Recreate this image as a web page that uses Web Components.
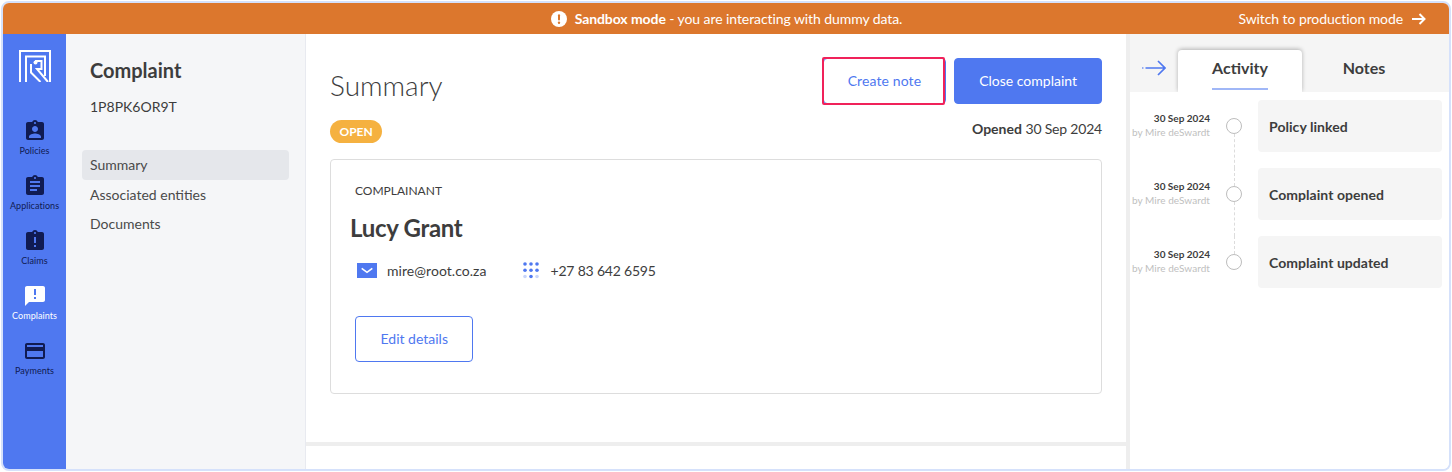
<!DOCTYPE html>
<html>
<head>
<meta charset="utf-8">
<title>Complaint</title>
<style>
	html, body { margin: 0; height: 100%; background: #fff; }
	body { padding: 1px; box-sizing: border-box; font-family: Lato, sans-serif; color: #3d3d3d; }
</style>
</head>
<body>
<app-frame>
	<sandbox-banner slot="banner"></sandbox-banner>
	<side-rail slot="rail">
		<rail-item label="Policies" icon="ind"></rail-item>
		<rail-item label="Applications" icon="assign"></rail-item>
		<rail-item label="Claims" icon="late"></rail-item>
		<rail-item label="Complaints" icon="announce" active></rail-item>
		<rail-item label="Payments" icon="card"></rail-item>
	</side-rail>
	<sub-nav slot="nav" title="Complaint" ref="1P8PK6OR9T">
		<nav-link active>Summary</nav-link>
		<nav-link>Associated entities</nav-link>
		<nav-link>Documents</nav-link>
	</sub-nav>
	<summary-view slot="main"></summary-view>
	<activity-panel slot="aside">
		<activity-row first title="Policy linked"></activity-row>
		<activity-row title="Complaint opened"></activity-row>
		<activity-row last title="Complaint updated"></activity-row>
	</activity-panel>
</app-frame>

<script>
const html = String.raw;
const css = String.raw;

const ICONS = {
	ind: "M19 3h-4.18C14.4 1.84 13.3 1 12 1c-1.3 0-2.4.84-2.82 2H5c-1.1 0-2 .9-2 2v14c0 1.1.9 2 2 2h14c1.1 0 2-.9 2-2V5c0-1.1-.9-2-2-2zm-7 0c.55 0 1 .45 1 1s-.45 1-1 1-1-.45-1-1 .45-1 1-1zm0 4c1.66 0 3 1.34 3 3s-1.34 3-3 3-3-1.34-3-3 1.34-3 3-3zm6 12H6v-1.4c0-2 4-3.1 6-3.1s6 1.1 6 3.1V19z",
	assign: "M19 3h-4.18C14.4 1.84 13.3 1 12 1c-1.3 0-2.4.84-2.82 2H5c-1.1 0-2 .9-2 2v14c0 1.1.9 2 2 2h14c1.1 0 2-.9 2-2V5c0-1.1-.9-2-2-2zm-7 0c.55 0 1 .45 1 1s-.45 1-1 1-1-.45-1-1 .45-1 1-1zm2 14H7v-2h7v2zm3-4H7v-2h10v2zm0-4H7V7h10v2z",
	late: "M19 3h-4.18C14.4 1.84 13.3 1 12 1c-1.3 0-2.4.84-2.82 2H5c-1.1 0-2 .9-2 2v14c0 1.1.9 2 2 2h14c1.1 0 2-.9 2-2V5c0-1.1-.9-2-2-2zm-6 15h-2v-2h2v2zm0-4h-2V8h2v6zm-1-9c-.55 0-1-.45-1-1s.45-1 1-1 1 .45 1 1-.45 1-1 1z",
	announce: "M20 2H4c-1.1 0-1.99.9-1.99 2L2 22l4-4h14c1.1 0 2-.9 2-2V4c0-1.1-.9-2-2-2zm-7 9h-2V5h2v6zm0 4h-2v-2h2v2z",
	card: "M20 4H4c-1.11 0-1.99.89-1.99 2L2 18c0 1.11.89 2 2 2h16c1.11 0 2-.89 2-2V6c0-1.11-.89-2-2-2zm0 14H4v-6h16v6zm0-10H4V6h16v2z",
};

// small helper, every element here is just a template in a shadow root
function define(name, markup) {
	const template = document.createElement("template");
	template.innerHTML = markup;
	customElements.define(name, class extends HTMLElement {
		constructor() {
			super();
			this.attachShadow({ mode: "open" });
			this.shadowRoot.appendChild(template.content.cloneNode(true));
		}
	});
}

define("app-frame", html`
	<style>${css`
		:host {
			display: grid;
			grid-template-columns: 63px 240px 820px 4px 1fr;
			grid-template-rows: 31px 1fr;
			height: 100%;
			box-sizing: border-box;
			border: 2px solid #d5e1fb;
			border-radius: 8px;
			overflow: hidden;
			background: #fff;
		}
		slot[name="banner"] { display: block; grid-column: 1 / -1; }
		.split { background: #eeeeee; }
	`}</style>
	<slot name="banner"></slot>
	<slot name="rail"></slot>
	<slot name="nav"></slot>
	<slot name="main"></slot>
	<div class="split"></div>
	<slot name="aside"></slot>
`);

define("sandbox-banner", html`
	<style>${css`
		:host {
			display: grid;
			grid-template-columns: 1fr auto 1fr;
			align-items: center;
			height: 31px;
			background: #dc772d;
			color: #fff;
			font-size: 14px;
			letter-spacing: -0.08px;
		}
		.msg { grid-column: 2; display: flex; align-items: center; gap: 7px; }
		.switch {
			justify-self: end;
			display: flex;
			align-items: center;
			gap: 9px;
			padding-right: 23px;
		}
		b { font-weight: 700; }
		svg { display: block; }
	`}</style>
	<div class="msg">
		<svg width="18" height="18" viewBox="0 0 18 18"><circle cx="9" cy="9" r="8" fill="#fff"/><rect x="8" y="4.2" width="2" height="6.2" rx="1" fill="#dc772d"/><circle cx="9" cy="12.7" r="1.2" fill="#dc772d"/></svg>
		<span><b>Sandbox mode</b> - you are interacting with dummy data.</span>
	</div>
	<div class="switch">
		<span>Switch to production mode</span>
		<svg width="14" height="12" viewBox="0 0 14 12" fill="none" stroke="#fff" stroke-width="2"><path d="M0 6h12.5M7.5 1l5 5-5 5"/></svg>
	</div>
`);

define("side-rail", html`
	<style>${css`
		:host {
			display: flex;
			flex-direction: column;
			align-items: center;
			background: #4f78f0;
			padding-top: 16px;
		}
		svg { display: block; margin-bottom: 37px; }
		.items { display: flex; flex-direction: column; width: 100%; gap: 7px; }
	`}</style>
	<svg width="32" height="32" viewBox="0 0 32 32" fill="none" stroke="#fff" stroke-width="2">
		<path d="M1 32V1h30v31"/>
		<path d="M7 32V6.5h19V26"/>
		<path d="M12 14v8.5L21.5 32"/>
		<path d="M16 11h6.5v8H18L29 32"/>
		<circle cx="16.5" cy="12.5" r="2" fill="#fff" stroke="none"/>
	</svg>
	<div class="items"><slot></slot></div>
`);

customElements.define("rail-item", class extends HTMLElement {
	constructor() {
		super();
		this.attachShadow({ mode: "open" });
	}
	connectedCallback() {
		const icon = ICONS[this.getAttribute("icon")];
		this.shadowRoot.innerHTML = html`
			<style>${css`
				:host {
					display: flex;
					flex-direction: column;
					align-items: center;
					height: 48px;
					color: #101b52;
					font-size: 9px;
					line-height: 12px;
					letter-spacing: 0.05px;
				}
				:host([active]) { color: #fff; }
				svg { display: block; margin-bottom: 2px; }
			`}</style>
			<svg width="24" height="24" viewBox="0 0 24 24" fill="currentColor"><path d="${icon}"/></svg>
			<span>${this.getAttribute("label")}</span>
		`;
	}
});

customElements.define("sub-nav", class extends HTMLElement {
	constructor() {
		super();
		this.attachShadow({ mode: "open" });
	}
	connectedCallback() {
		this.shadowRoot.innerHTML = html`
			<style>${css`
				:host {
					display: block;
					box-sizing: border-box;
					background: #f5f6f8;
					border-right: 1px solid #e8eaf0;
					padding: 23px 16px 0;
				}
				h2 {
					margin: 0 0 0 8px;
					font-size: 20px;
					line-height: 26px;
					font-weight: 700;
					color: #3d3d3d;
				}
				p {
					margin: 14px 0 33px 8px;
					font-size: 14px;
					line-height: 20px;
					color: #3d3d3d;
				}
				.links { display: flex; flex-direction: column; }
			`}</style>
			<h2>${this.getAttribute("title")}</h2>
			<p>${this.getAttribute("ref")}</p>
			<div class="links"><slot></slot></div>
		`;
	}
});

define("nav-link", html`
	<style>${css`
		:host {
			display: block;
			height: 29.5px;
			line-height: 29.5px;
			padding-left: 8px;
			border-radius: 4px;
			font-size: 14px;
			color: #4a4a4a;
		}
		:host([active]) { background: #e5e7eb; }
	`}</style>
	<slot></slot>
`);

define("action-button", html`
	<style>${css`
		:host {
			display: inline-flex;
			align-items: center;
			justify-content: center;
			position: relative;
			box-sizing: border-box;
			height: 46px;
			padding: 0 24.5px 2px;
			border: 1px solid #4f78f0;
			border-radius: 4px;
			background: #fff;
			color: #4f78f0;
			font-size: 14px;
		}
		:host([primary]) { background: #4f78f0; color: #fff; padding: 0 24px 2px; }
		:host([focused]) { letter-spacing: 0.1px; padding: 0 24px 2px; }
		:host([focused])::after {
			content: "";
			position: absolute;
			inset: -2px 0 -2px -2px;
			border: 2px solid #f0225a;
			border-radius: 2px;
		}
	`}</style>
	<slot></slot>
`);

define("summary-view", html`
	<style>${css`
		:host {
			display: block;
			padding: 24px 24px 0;
			box-sizing: border-box;
		}
		.head { display: flex; align-items: center; justify-content: space-between; height: 46px; }
		h1 {
			margin: 8px 0 0;
			font-size: 28px;
			font-weight: 300;
			color: #3d3d3d;
		}
		.buttons { display: flex; gap: 8px; }
		.status {
			display: flex;
			align-items: flex-start;
			justify-content: space-between;
			margin: 16px 0;
			height: 23px;
			font-size: 14px;
			line-height: 18px;
		}
		.date { letter-spacing: -0.2px; }
		.pill {
			background: #f5b140;
			color: #fff;
			font-weight: 700;
			font-size: 12px;
			line-height: 23px;
			padding: 0 9.5px;
			border-radius: 12px;
		}
		.card {
			box-sizing: border-box;
			height: 235px;
			border: 1px solid #dddddd;
			border-radius: 4px;
			padding: 23px 24px;
		}
		.label { font-size: 12px; line-height: 16px; color: #3d3d3d; }
		h3 {
			margin: 13px 0 0 -5px;
			font-size: 24px;
			line-height: 32px;
			font-weight: 700;
			letter-spacing: -0.3px;
			color: #3d3d3d;
		}
		.contact { display: flex; align-items: center; margin: 16px 0 36px; height: 20px; font-size: 14px; }
		.contact svg { display: block; flex: none; }
		.mail { margin-left: 10px; letter-spacing: 0.05px; }
		.phone { margin-left: 12px; letter-spacing: -0.2px; }
		.foot {
			margin: 48px -24px 0;
			height: 4px;
			background: #eeeeee;
		}
	`}</style>
	<div class="head">
		<h1>Summary</h1>
		<div class="buttons">
			<action-button focused>Create note</action-button>
			<action-button primary>Close complaint</action-button>
		</div>
	</div>
	<div class="status">
		<span class="pill">OPEN</span>
		<span><b>Opened</b> <span class="date">30 Sep 2024</span></span>
	</div>
	<div class="card">
		<div class="label">COMPLAINANT</div>
		<h3>Lucy Grant</h3>
		<div class="contact">
			<svg width="20" height="15" viewBox="0 0 20 15" style="margin-left:2px"><rect width="20" height="15" fill="#4f78f0"/><path d="M4.7 5.3L10 9.3l5.3-4" fill="none" stroke="#fff" stroke-width="1.6"/></svg>
			<span class="mail">mire@root.co.za</span>
			<svg width="16" height="17" viewBox="0 0 16 17" fill="#4f78f0" style="margin-left:36px">
				<circle cx="2" cy="2" r="1.8"/><circle cx="8" cy="2" r="1.8"/><circle cx="14" cy="2" r="1.8"/>
				<circle cx="2" cy="8.2" r="1.8"/><circle cx="8" cy="8.2" r="1.8"/><circle cx="14" cy="8.2" r="1.8"/>
				<circle cx="2" cy="14.5" r="1.8" fill="#c9d6fa"/><circle cx="8" cy="14.5" r="1.8"/><circle cx="14" cy="14.5" r="1.8" fill="#c9d6fa"/>
			</svg>
			<span class="phone">+27 83 642 6595</span>
		</div>
		<action-button>Edit details</action-button>
	</div>
	<div class="foot"></div>
`);

define("activity-panel", html`
	<style>${css`
		:host { display: block; background: #fff; }
		.tabs {
			display: flex;
			align-items: flex-end;
			height: 58px;
			background: #f5f5f5;
		}
		.arrow { display: block; margin: 0 12px 16px 12px; }
		.tab {
			width: 124px;
			height: 42px;
			box-sizing: border-box;
			text-align: center;
			font-size: 16px;
			font-weight: 700;
			line-height: 36px;
			color: #3d3d3d;
		}
		.tab.on {
			background: #fff;
			border-radius: 4px 4px 0 0;
			box-shadow: 0 -1px 4px rgba(0, 0, 0, 0.28);
			clip-path: inset(-6px -6px 0 -6px);
		}
		.tab.on span {
			display: inline-block;
			height: 40px;
			box-sizing: border-box;
			border-bottom: 2px solid #a0b7f7;
		}
		.list { padding: 8px 7px 0 0; }
	`}</style>
	<div class="tabs">
		<svg class="arrow" width="24" height="16" viewBox="0 0 24 16" fill="none" stroke="#4f78f0" stroke-width="1.7"><path d="M3.5 8H23M16 1l7 7-7 7"/><circle cx="0.8" cy="8" r="0.8" fill="#4f78f0" stroke="none"/></svg>
		<div class="tab on"><span>Activity</span></div>
		<div class="tab">Notes</div>
	</div>
	<div class="list"><slot></slot></div>
`);

customElements.define("activity-row", class extends HTMLElement {
	constructor() {
		super();
		this.attachShadow({ mode: "open" });
	}
	connectedCallback() {
		this.shadowRoot.innerHTML = html`
			<style>${css`
				:host {
					display: grid;
					grid-template-columns: 80px 48px 1fr;
					padding-bottom: 16px;
				}
				:host([last]) { padding-bottom: 0; }
				.who { text-align: right; height: 52px; padding-top: 11px; box-sizing: border-box; }
				.date { font-size: 10px; line-height: 14px; font-weight: 700; color: #3d3d3d; }
				.by { font-size: 10px; line-height: 14px; color: #c0c0c0; white-space: nowrap; letter-spacing: 0.05px; }
				.mark { display: flex; flex-direction: column; align-items: center; margin-bottom: -16px; }
				.dash { width: 0; border-left: 1px dashed #dcdcdc; }
				.dash.top { height: 18px; }
				.dash.bottom { flex: 1; }
				:host([first]) .dash.top { border-color: transparent; }
				:host([last]) .dash.bottom { border-color: transparent; }
				.dot {
					flex: none;
					width: 16px;
					height: 16px;
					box-sizing: border-box;
					border: 1px solid #bdbdbd;
					border-radius: 50%;
				}
				.box {
					display: flex;
					align-items: center;
					height: 52px;
					padding-left: 11px;
					background: #f5f5f5;
					border-radius: 4px;
					font-size: 14px;
					font-weight: 700;
					letter-spacing: 0.05px;
					color: #3d3d3d;
				}
			`}</style>
			<div class="who">
				<div class="date">30 Sep 2024</div>
				<div class="by">by Mire deSwardt</div>
			</div>
			<div class="mark">
				<div class="dash top"></div>
				<div class="dot"></div>
				<div class="dash bottom"></div>
			</div>
			<div class="box">${this.getAttribute("title")}</div>
		`;
	}
});
</script>
</body>
</html>
